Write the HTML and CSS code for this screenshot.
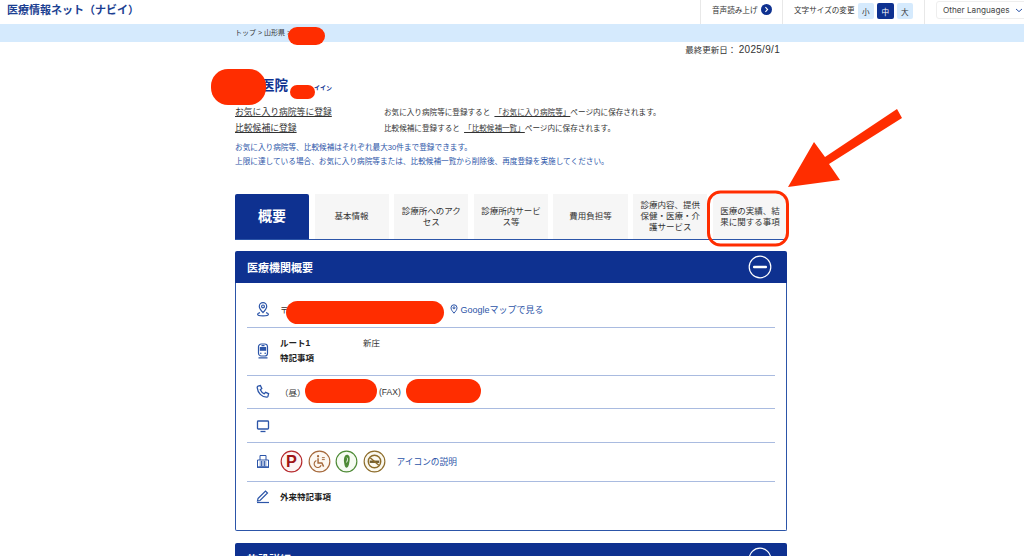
FILE: index.html
```html
<!DOCTYPE html>
<html lang="ja">
<head>
  <meta charset="UTF-8" />
  <meta name="viewport" content="width=device-width, initial-scale=1.0"/>
  <title>医療情報ネット（ナビイ）</title>
  <link rel="stylesheet" href="styles.css">
</head>
<body>
  <header class="site-header">
    <a class="logo">医療情報ネット（ナビイ）</a>
    <div class="tools">
      <div class="tool tool-voice">
        <span>音声読み上げ</span>
        <svg class="voice-icon" viewBox="0 0 12 12"><circle cx="6" cy="6" r="6" fill="#0e3190"/><path d="M4.800 3.500 7.200 6 4.800 8.500" fill="none" stroke="#fff" stroke-width="1.200"/></svg>
      </div>
      <div class="tool tool-size">
        <span>文字サイズの変更</span>
        <button class="size-btn">小</button>
        <button class="size-btn active">中</button>
        <button class="size-btn">大</button>
      </div>
      <div class="tool tool-lang">
        <div class="lang-select">Other Languages
          <svg class="chev" viewBox="0 0 8 5"><path d="M1 1l3 2.600L7 1" fill="none" stroke="#2c55a8" stroke-width="1"/></svg>
        </div>
      </div>
    </div>
  </header>

  <div class="crumbs"><div class="inner">トップ &gt; 山形県 &gt;</div></div>

  <main class="inner">
    <p class="updated">最終更新日： <span class="updated-date">2025/9/1</span></p>

    <h1 class="clinic"><span class="clinic-name">医院</span><small>イイン</small></h1>

    <div class="fav-row">
      <a class="fav-link">お気に入り病院等に登録</a>
      <p>お気に入り病院等に登録すると <a>「お気に入り病院等」</a>ページ内に保存されます。</p>
    </div>
    <div class="fav-row">
      <a class="fav-link">比較候補に登録</a>
      <p>比較候補に登録すると <a>「比較候補一覧」</a>ページ内に保存されます。</p>
    </div>

    <div class="notes">
      <p>お気に入り病院等、比較候補はそれぞれ最大30件まで登録できます。</p>
      <p>上限に達している場合、お気に入り病院等または、比較候補一覧から削除後、再度登録を実施してください。</p>
    </div>

    <nav class="tabs">
      <div class="tab active">概要</div>
      <div class="tab">基本情報</div>
      <div class="tab">診療所へのアクセス</div>
      <div class="tab">診療所内サービス等</div>
      <div class="tab">費用負担等</div>
      <div class="tab">診療内容、提供保健・医療・介護サービス</div>
      <div class="tab">医療の実績、結果に関する事項</div>
    </nav>

    <section class="panel">
      <div class="panel-head">
        <h2>医療機関概要</h2>
        <svg class="toggle" viewBox="0 0 24 24"><circle cx="12" cy="12" r="10.800" fill="none" stroke="#fff" stroke-width="1.200"/><rect x="5" y="10.800" width="14" height="2.400" rx="1" fill="#fff"/></svg>
      </div>
      <div class="panel-body">
        <div class="row row-addr">
          <svg class="row-icon" viewBox="0 0 16 16" fill="none" stroke="#2c55a8" stroke-width="1.200"><path d="M8 11.600C6 9.400 4.300 7.600 4.300 5.400a3.700 3.700 0 0 1 7.400 0c0 2.200-1.700 4-3.700 6.200z"/><circle cx="8" cy="5.400" r="1.400"/><path d="M5 11.600c-1.600.4-2.400 1-2.400 1.600 0 1 2.400 1.600 5.400 1.600s5.400-.6 5.400-1.600c0-.6-.8-1.200-2.400-1.600"/></svg>
          <span>〒</span>
          <a class="map-link">
            <svg class="pin" viewBox="0 0 8 10" fill="none" stroke="#2c55a8" stroke-width="1"><path d="M4 9.200C2.400 7.200 1 5.800 1 3.800a3 3 0 0 1 6 0c0 2-1.400 3.400-3 5.400z"/><circle cx="4" cy="3.800" r="1"/></svg>Googleマップで見る</a>
        </div>
        <div class="row row-route">
          <svg class="row-icon" viewBox="0 0 16 16" fill="none" stroke="#2c55a8" stroke-width="1.200"><rect x="3.500" y="1" width="9" height="12" rx="2.800"/><rect x="4.800" y="4" width="6.400" height="3.800" fill="#2c55a8" stroke="none"/><circle cx="5.800" cy="10.300" r=".8" fill="#2c55a8" stroke="none"/><circle cx="10.200" cy="10.300" r=".8" fill="#2c55a8" stroke="none"/><path d="M6.500 2.600h3M3.500 14.800h9"/></svg>
          <div class="route">
            <div class="route-line"><b>ルート1</b><span>新庄</span></div>
            <b>特記事項</b>
          </div>
        </div>
        <div class="row row-tel">
          <svg class="row-icon" viewBox="0 0 16 16" fill="none" stroke="#2c55a8" stroke-width="1.300"><path d="M3 2.200l2.400-.6 1.400 3-1.500 1.200c.8 1.800 2.200 3.200 4 4l1.300-1.500 3 1.400-.6 2.500c-.2.7-.8 1-1.400 1C6.800 13 2.800 9 2.200 3.600c0-.6.2-1.200.8-1.400z"/></svg>
          <span class="tel-day">（昼）</span>
          <span class="tel-fax">(FAX)</span>
        </div>
        <div class="row row-web">
          <svg class="row-icon" viewBox="0 0 16 16" fill="none" stroke="#2c55a8" stroke-width="1.300"><rect x="2.500" y="3" width="11" height="8" rx=".8"/><path d="M5.500 13.500h5"/></svg>
        </div>
        <div class="row row-badges">
          <svg class="row-icon" viewBox="0 0 16 16" fill="none" stroke="#2c55a8" stroke-width="1"><path d="M5 7V2.500h6V7"/><path d="M2.500 14V7h11v7z"/><path d="M2 14.300h12" stroke-width="1.200"/><path d="M4.500 9h7M4.500 11h7M4.500 13h7M6.500 8v5M9.500 8v5" stroke-width=".8"/></svg>
          <div class="badges">
            <svg class="badge" viewBox="0 0 24 24"><circle cx="12" cy="12" r="10.800" fill="#fdf5f5" stroke="#b5282c" stroke-width="1.200"/><text x="12" y="17.800" text-anchor="middle" class="badge-p">P</text></svg>
            <svg class="badge" viewBox="0 0 24 24" fill="none" stroke="#a5683a"><circle cx="12" cy="12" r="10.800" fill="#fdf8f2" stroke-width="1.200"/><circle cx="10.500" cy="6.500" r="1.200" fill="#a5683a" stroke="none"/><path d="M10.500 8.500v5h4l1.800 3.800" stroke-width="1.500"/><path d="M8.700 11a3.800 3.800 0 1 0 5 5" stroke-width="1.200"/><path d="M14.500 8h3M14.500 10h3" stroke-width="1"/></svg>
            <svg class="badge" viewBox="0 0 24 24"><circle cx="12" cy="12" r="10.800" fill="#f6fbf2" stroke="#4d8a35" stroke-width="1.200"/><path d="M12.500 5c2.400 0 3.200 2.500 2.800 5.500-.4 3-.8 7.500-3 8-1.800.3-2.300-2.500-2.800-5.500C9 10 9.500 5 12.500 5z" fill="#4d8a35"/><path d="M12.500 8c1 1.200.6 3-.5 5" fill="none" stroke="#f6fbf2" stroke-width="1"/></svg>
            <svg class="badge" viewBox="0 0 24 24" fill="none"><circle cx="12" cy="12" r="10.800" fill="#fbf9f0" stroke="#8d6c2a" stroke-width="1.200"/><circle cx="12" cy="12" r="6.500" stroke="#8d6c2a" stroke-width="1.500"/><rect x="7" y="11" width="10" height="2.500" fill="#6f5b2e"/><path d="M7.500 8l9 8" stroke="#8d6c2a" stroke-width="1.500"/></svg>
          </div>
          <a class="icon-help">アイコンの説明</a>
        </div>
        <div class="row row-note">
          <svg class="row-icon" viewBox="0 0 16 16" fill="none" stroke="#2c55a8" stroke-width="1.200"><path d="M3 10.500 10.500 3l2 2L5 12.500l-2.500.5z"/><path d="M2 14.500h12"/></svg>
          <b>外来特記事項</b>
        </div>
      </div>
    </section>

    <section class="panel panel-next">
      <div class="panel-head">
        <h2>施設詳細</h2>
        <svg class="toggle" viewBox="0 0 24 24"><circle cx="12" cy="12" r="10.800" fill="none" stroke="#fff" stroke-width="1.200"/><rect x="5" y="10.800" width="14" height="2.400" rx="1" fill="#fff"/></svg>
      </div>
    </section>
  </main>

  <!-- redactions and the arrow sit on top of the screenshot -->
  <svg class="markup" viewBox="0 0 1024 556">
    <g fill="#ff2d00">
      <rect x="288" y="27" width="37" height="18" rx="9"/>
      <rect x="211" y="69" width="55" height="36" rx="17"/>
      <rect x="290" y="85" width="25" height="14" rx="7"/>
      <rect x="286" y="301" width="158" height="23" rx="11.500"/>
      <rect x="305" y="379" width="72" height="24" rx="12"/>
      <rect x="406" y="379" width="75" height="24" rx="12"/>
      <path d="M897 109 902 118 829 164 840 180 788 187 814 142 825 157z"/>
    </g>
    <rect x="708.500" y="192" width="79" height="53" rx="12" fill="none" stroke="#ff2d00" stroke-width="3"/>
  </svg>
</body>
</html>
```

FILE: styles.css
```css
:root {
  --navy: #0e3190;
  --blue: #2c55a8;
  --line: #a9bbe0;
  --pale: #d5eafd;
  --text: #333333;
}

* {
  box-sizing: border-box;
  margin: 0;
  padding: 0;
}

body {
  font-family: "Liberation Sans", "Noto Sans CJK JP", sans-serif;
  color: var(--text);
  background: #fff;
  height: 556px;
  overflow: hidden;
  position: relative;
}

.site-header {
  height: 24px;
  display: flex;
  justify-content: space-between;
  padding-left: 7px;
}

.logo {
  font-size: 11px;
  line-height: 21px;
  font-weight: 700;
  color: #1c3f92;
}

.tools {
  display: flex;
}

.tool {
  display: flex;
  align-items: center;
  height: 24px;
  border-left: 1px solid #e8e8e8;
  font-size: 7.600px;
  padding-bottom: 5px;
}

.tool-voice {
  width: 82px;
  padding-left: 11px;
  gap: 3px;
}

.voice-icon {
  width: 11px;
  height: 11px;
}

.tool-size {
  width: 142px;
  padding-left: 11px;
  gap: 3px;
}

.size-btn {
  width: 16.500px;
  height: 16px;
  margin-top: 3px;
  border: none;
  border-radius: 2px;
  background: var(--pale);
  color: #333;
  font: inherit;
}

.size-btn.active {
  background: var(--navy);
  color: #fff;
}

.tool-lang {
  width: 100px;
  padding-left: 11px;
  overflow: hidden;
}

.lang-select {
  flex: none;
  width: 92px;
  height: 18px;
  margin-top: 1px;
  padding-left: 6px;
  display: flex;
  align-items: center;
  gap: 5px;
  border: 1px solid #eee;
  border-radius: 3px;
  font-family: "Inter", sans-serif;
  font-size: 8.200px;
  color: #444;
  white-space: nowrap;
}

.chev {
  width: 8px;
  height: 5px;
}

.crumbs {
  height: 18px;
  background: var(--pale);
  font-size: 7px;
  line-height: 18px;
}

.inner {
  width: 552px;
  margin-left: 235px;
}

.updated {
  font-size: 8.500px;
  line-height: 12px;
  margin-top: 2px;
  padding-right: 7px;
  text-align: right;
  color: #333;
}

.updated-date {
  font-size: 10px;
  letter-spacing: 0.3px;
}

.clinic {
  margin-top: 20px;
  height: 19px;
  padding-left: 26px;
  display: flex;
  align-items: baseline;
  color: var(--navy);
  font-size: 13.500px;
  line-height: 19px;
  font-weight: 700;
}

.clinic small {
  margin-left: 26px;
  font-size: 6px;
}

.fav-row {
  display: flex;
  align-items: center;
  height: 16px;
  font-size: 7.600px;
}

.clinic + .fav-row {
  margin-top: 8px;
}

.fav-link {
  width: 149px;
  font-size: 8.800px;
  text-decoration: underline;
}

.fav-row p a {
  margin-left: 2px;
  text-decoration: underline;
}

.notes {
  margin-top: 6px;
  color: var(--blue);
  font-size: 7.650px;
  line-height: 14px;
}

.tabs {
  margin-top: 25px;
  height: 46px;
  display: grid;
  grid-template-columns: 74px repeat(6, 1fr);
  column-gap: 5.500px;
  border-bottom: 1px solid var(--blue);
}

.tab {
  display: flex;
  align-items: center;
  justify-content: center;
  padding: 0 5px;
  background: #f6f6f6;
  font-size: 8.500px;
  line-height: 11px;
  text-align: center;
  height: 45px;
}

.tab.active {
  background: var(--navy);
  color: #fff;
  font-size: 14px;
  font-weight: 700;
  border-radius: 2px 2px 0 0;
}

.panel {
  margin-top: 11px;
}

.panel-head {
  height: 32px;
  padding: 0 15px 0 12px;
  display: flex;
  align-items: center;
  justify-content: space-between;
  background: var(--navy);
  border-radius: 2px 2px 0 0;
  color: #fff;
}

.panel-head h2 {
  font-size: 11px;
  font-weight: 700;
}

.toggle {
  width: 24px;
  height: 24px;
}

.panel-body {
  height: 248px;
  padding: 0 11px;
  border: 1px solid var(--blue);
  border-top: none;
  border-radius: 0 0 2px 2px;
}

.panel-next {
  margin-top: 12px;
}

.row {
  display: flex;
  align-items: center;
  font-size: 8.500px;
  border-bottom: 1px solid var(--line);
}

.row b {
  color: #222;
}

.row-icon {
  flex: none;
  width: 16px;
  height: 16px;
  margin: 0 9px 0 8px;
}

.row-addr {
  height: 45px;
  padding-top: 8px;
}

.map-link {
  margin-left: 161px;
  display: flex;
  align-items: center;
  gap: 3px;
  font-size: 9px;
  color: var(--blue);
}

.pin {
  width: 8px;
  height: 10px;
}

.row-route {
  height: 48px;
  padding-bottom: 2px;
}

.route {
  display: flex;
  flex-direction: column;
  gap: 3px;
  line-height: 12px;
}

.route-line {
  display: flex;
}

.route-line b {
  width: 83px;
}

.row-tel {
  height: 33px;
}

.tel-day {
  width: 99px;
}

.row-web {
  height: 34px;
}

.row-badges {
  height: 39px;
  padding-bottom: 2px;
}

.badges {
  display: flex;
  gap: 4.500px;
}

.badge {
  width: 23px;
  height: 23px;
}

.badge-p {
  font-family: "Liberation Sans", sans-serif;
  font-size: 17px;
  font-weight: 700;
  fill: #a01518;
}

.icon-help {
  margin-left: 11px;
  font-size: 8.700px;
  color: var(--blue);
}

.row-note {
  height: 32px;
  padding-bottom: 4px;
  border-bottom: none;
}

.markup {
  position: absolute;
  left: 0;
  top: 0;
  width: 1024px;
  height: 556px;
  pointer-events: none;
}
```
